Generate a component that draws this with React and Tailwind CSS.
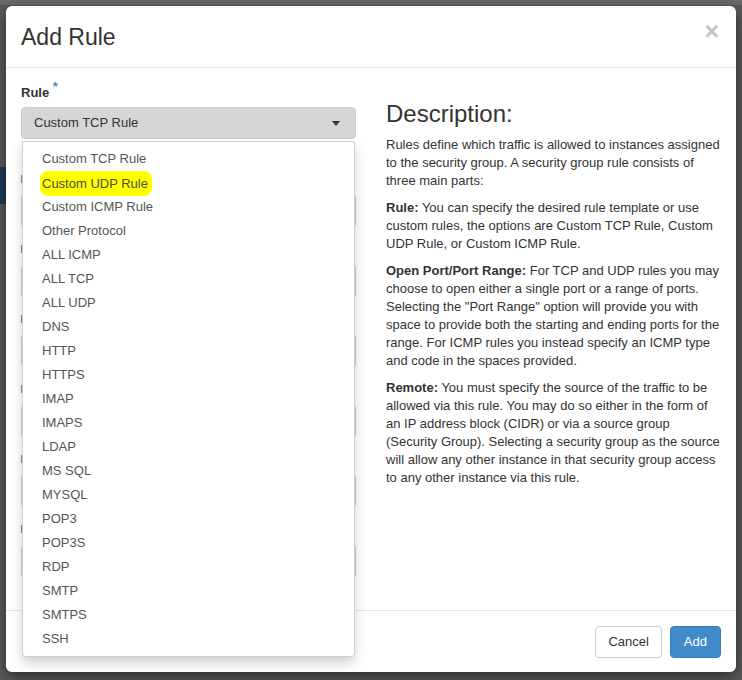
import React from "react";

const options = [
  "Custom TCP Rule",
  "Custom UDP Rule",
  "Custom ICMP Rule",
  "Other Protocol",
  "ALL ICMP",
  "ALL TCP",
  "ALL UDP",
  "DNS",
  "HTTP",
  "HTTPS",
  "IMAP",
  "IMAPS",
  "LDAP",
  "MS SQL",
  "MYSQL",
  "POP3",
  "POP3S",
  "RDP",
  "SMTP",
  "SMTPS",
  "SSH",
];

const hiddenGroups = [1, 2, 3, 4, 5, 6];

export default function App() {
  return (
    <div
      className="relative w-[742px] h-[680px] overflow-hidden bg-[#5a5a5a] pt-[6px] pl-[6px]"
      style={{ fontFamily: '"Liberation Sans", Arial, sans-serif' }}
    >
      {/* page behind the overlay */}
      <div className="absolute left-0 top-0 w-full h-[5px] bg-[#6a6a6a]" />
      <div className="absolute left-0 top-[167px] w-[6px] h-[37px] bg-[#1f3b58]" />

      {/* modal */}
      <div className="relative w-[730px] h-[666px] bg-white rounded-[6px] shadow-[0_5px_15px_rgba(0,0,0,0.5)] flex flex-col text-[#333]">
        {/* header */}
        <div className="flex items-start justify-between pl-[15px] pr-[17px] pt-[15px] pb-[13px] border-b border-[#e5e5e5]">
          <h4 className="text-[23px] leading-[33px] font-normal">Add Rule</h4>
          <span className="text-[25px] leading-[25px] font-bold text-[#c4c4c4] -mt-[2px]">×</span>
        </div>

        {/* body */}
        <div className="flex-1 px-[15px] pt-[16px] grid grid-cols-2 gap-[30px]">
          {/* left column: form */}
          <div className="relative">
            <label className="block text-[13px] leading-[18px] font-bold">
              Rule <sup className="text-[#428bca] text-[13px] font-bold">*</sup>
            </label>
            <div className="relative mt-[5px]">
              <div className="h-[32px] flex items-center justify-between bg-[#d6d6d6] border border-[#cdcdcd] rounded-[4px] px-[12px] text-[13px] leading-[18px] text-[#333]">
                <span>Custom TCP Rule</span>
                <svg width="8" height="5" viewBox="0 0 8 5" className="mr-[3px]">
                  <path d="M0 0 L8 0 L4 5 Z" fill="#333" />
                </svg>
              </div>

              {/* open list */}
              <div className="absolute z-10 left-[1px] right-[1px] top-[34px] bg-white border border-[rgba(0,0,0,0.18)] rounded-b-[4px] shadow-[0_6px_12px_rgba(0,0,0,0.18)] py-[5px]">
                {options.map((o) => (
                  <div key={o} className="h-[24px] leading-[24px] pl-[19px] text-[13px] text-[#555] whitespace-nowrap">
                    {o === "Custom UDP Rule" ? (
                      <span className="inline-block -ml-[2px] pl-[2px] pr-[4px] h-[25px] leading-[25px] bg-[#ffff00] rounded-[8px] text-[#4d4d2a]">
                        {o}
                      </span>
                    ) : (
                      o
                    )}
                  </div>
                ))}
              </div>
            </div>

            {/* form inputs behind the open list */}
            <div className="mt-[30px] flex flex-col">
              {hiddenGroups.map((g) => (
                <div key={g} className="mb-[11px]">
                  <div className="h-[20px] flex items-center">
                    <span className="block w-[3px] h-[8px] bg-[#5b8fc4]" />
                  </div>
                  <div className="mt-[5px] h-[34px] border border-[#ccc] rounded-[4px]" />
                </div>
              ))}
            </div>
          </div>

          {/* right column: description */}
          <div>
            <h3 className="mt-[17px] mb-[9px] text-[24px] leading-[26px] font-normal">Description:</h3>
            <p className="text-[13px] leading-[18px] mb-[9px]">
              Rules define which traffic is allowed to instances assigned to the security group. A security group rule consists of three main parts:
            </p>
            <p className="text-[13px] leading-[18px] mb-[9px]">
              <b>Rule:</b> You can specify the desired rule template or use custom rules, the options are Custom TCP Rule, Custom UDP Rule, or Custom ICMP Rule.
            </p>
            <p className="text-[13px] leading-[18px] mb-[9px]">
              <b>Open Port/Port Range:</b> For TCP and UDP rules you may choose to open either a single port or a range of ports. Selecting the "Port Range" option will provide you with space to provide both the starting and ending ports for the range. For ICMP rules you instead specify an ICMP type and code in the spaces provided.
            </p>
            <p className="text-[13px] leading-[18px] mb-[9px]">
              <b>Remote:</b> You must specify the source of the traffic to be allowed via this rule. You may do so either in the form of an IP address block (CIDR) or via a source group (Security Group). Selecting a security group as the source will allow any other instance in that security group access to any other instance via this rule.
            </p>
          </div>
        </div>

        {/* footer */}
        <div className="border-t border-[#e5e5e5] px-[15px] pt-[15px] pb-[14px] flex justify-end gap-[8px]">
          <button className="h-[32px] px-[12px] border border-[#ccc] rounded-[4px] bg-white text-[13px] leading-[18px] text-[#333]">
            Cancel
          </button>
          <button className="h-[32px] px-[13px] border border-[#357ebd] rounded-[4px] bg-[#428bca] text-[13px] leading-[18px] text-white">
            Add
          </button>
        </div>
      </div>
    </div>
  );
}
